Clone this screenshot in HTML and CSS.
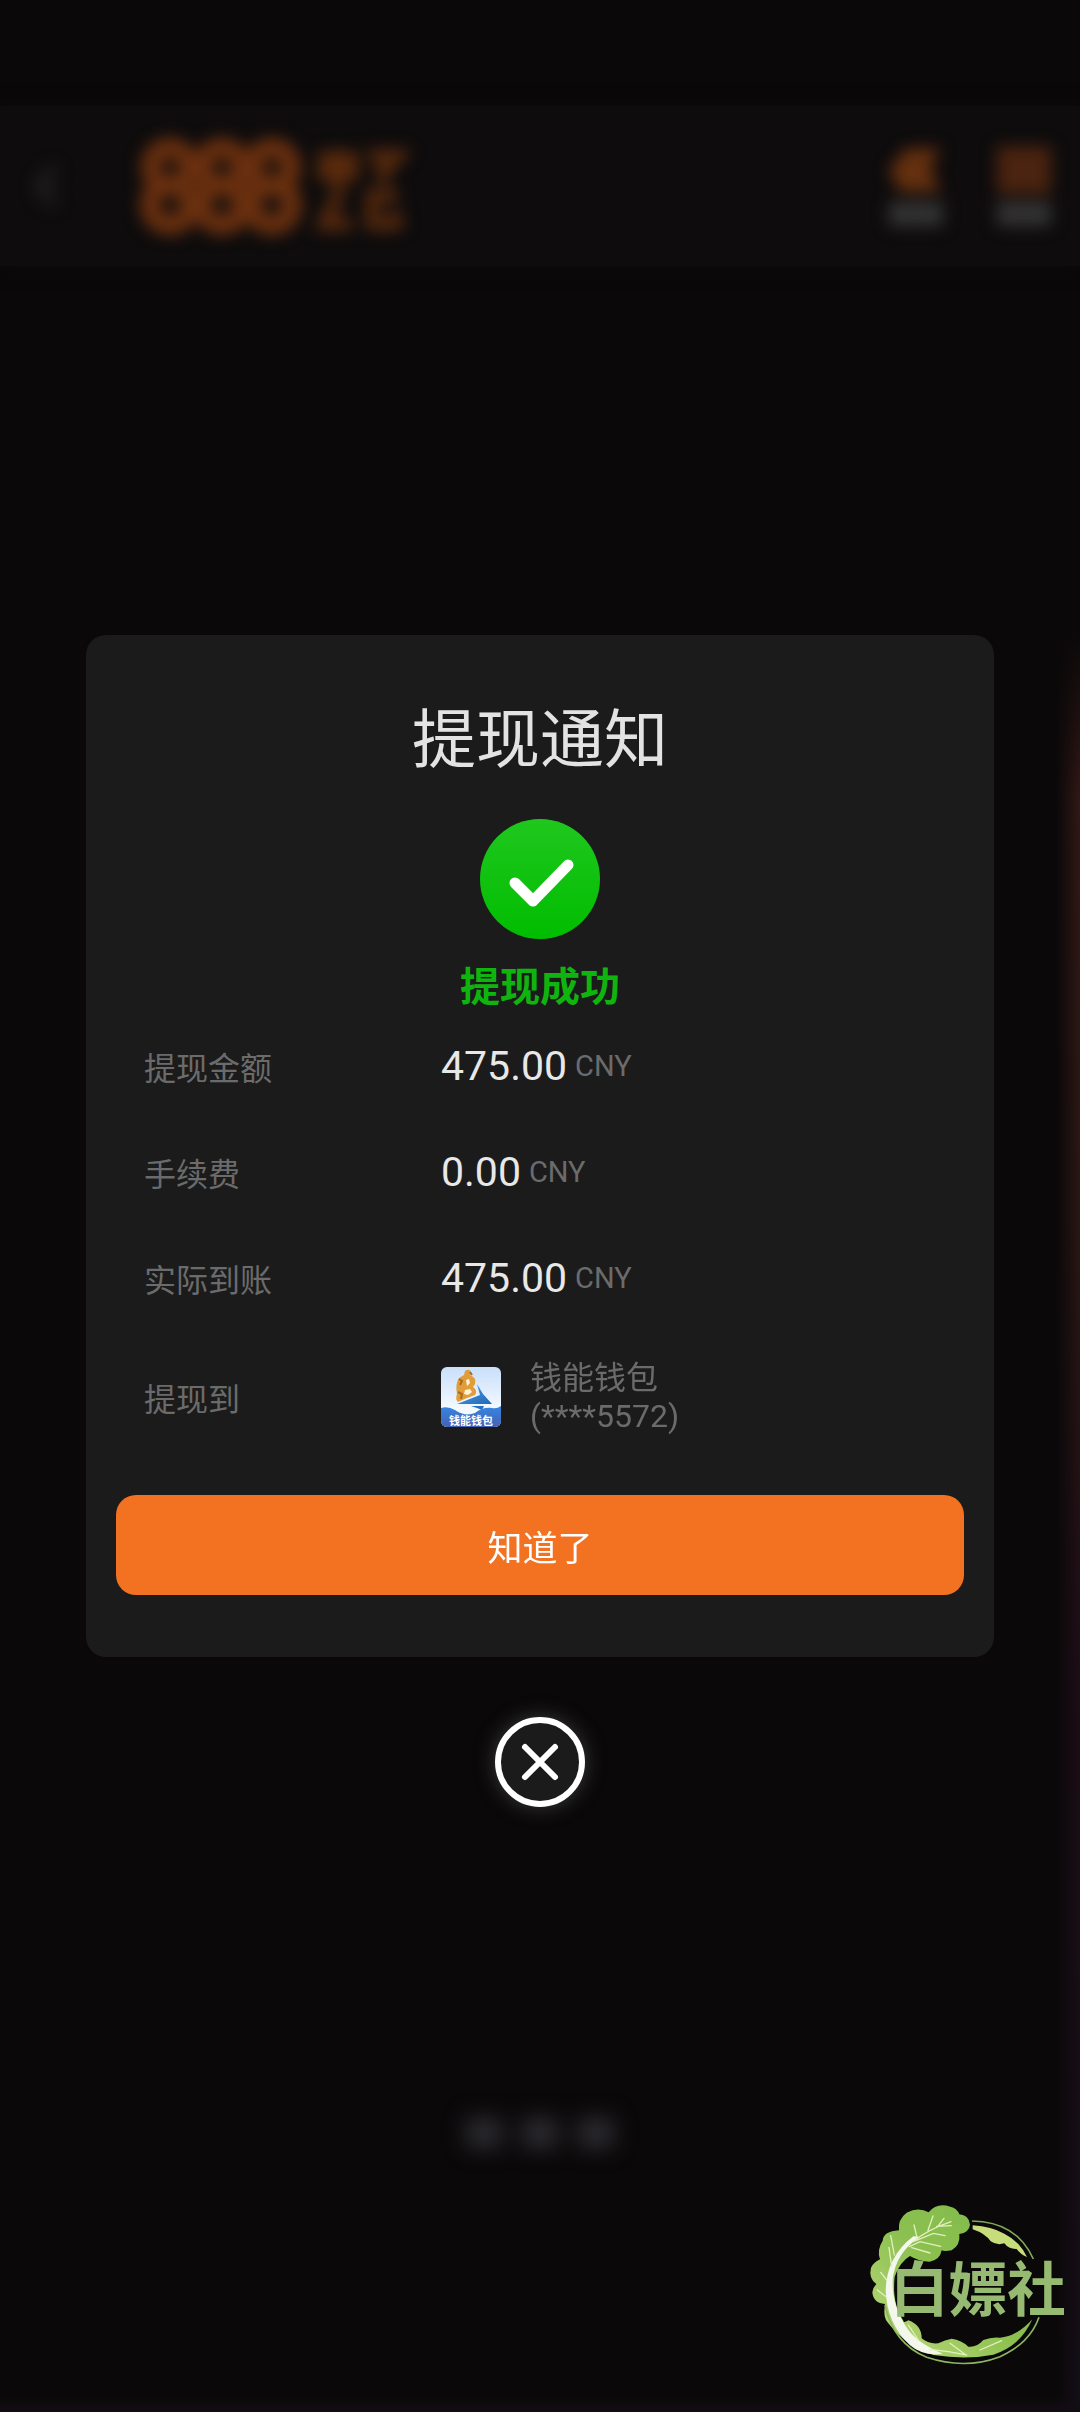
FILE: index.html
```html
<!DOCTYPE html>
<html lang="zh-CN">
<head>
<meta charset="utf-8">
<meta name="viewport" content="width=device-width, initial-scale=1">
<title>提现通知</title>
<link rel="stylesheet" href="styles.css">
</head>
<body>
<div class="page" aria-hidden="true">
  <header class="topbar">
    <svg class="back" viewBox="0 0 24 48"><path d="M20 6 6 24l14 18" fill="none" stroke="#333" stroke-width="6"/></svg>
    <svg class="brand" viewBox="0 0 270 100">
      <g fill="none" stroke="#6b300f" stroke-width="20">
        <circle cx="30" cy="31" r="19"/><circle cx="30" cy="69" r="20"/>
        <circle cx="82" cy="31" r="19"/><circle cx="82" cy="69" r="20"/>
        <circle cx="132" cy="31" r="19"/><circle cx="132" cy="69" r="20"/>
      </g>
      <g fill="none" stroke="#5c2b0d" stroke-width="12">
        <path d="M184 22h28v17h-28zM198 14v40M228 20h30l-15 14v14M200 56l-16 32h28M258 60h-26v28h24V76"/>
      </g>
    </svg>
    <div class="shortcuts">
      <span class="shortcut"><svg viewBox="0 0 50 44"><path d="M0 22 16 2h32L38 20l10 22H10z" fill="#65300f"/></svg><i></i></span>
      <span class="shortcut"><svg viewBox="0 0 50 44"><path d="M0 0h50v44H0z" fill="#4b2410"/></svg><i></i></span>
    </div>
  </header>
  <div class="dots"><i></i><i></i><i></i></div>
</div>

<div class="overlay">
  <section class="dialog" role="dialog" aria-labelledby="dialog-title">
    <h1 class="title" id="dialog-title">提现通知</h1>
    <svg class="success" viewBox="0 0 120 120" aria-hidden="true">
      <defs><linearGradient id="green" x2="0" y2="1"><stop stop-color="#20c71e"/><stop offset="1" stop-color="#00bd00"/></linearGradient></defs>
      <circle cx="60" cy="60" r="60" fill="url(#green)"/>
      <path d="M35 64 53 82 88 46" fill="none" stroke="#fff" stroke-width="11" stroke-linecap="round" stroke-linejoin="round"/>
    </svg>
    <p class="status">提现成功</p>
    <dl class="details">
      <dt>提现金额</dt><dd><span class="amount">475.00</span><span class="unit">CNY</span></dd>
      <dt>手续费</dt><dd><span class="amount">0.00</span><span class="unit">CNY</span></dd>
      <dt>实际到账</dt><dd><span class="amount">475.00</span><span class="unit">CNY</span></dd>
      <dt>提现到</dt>
      <dd>
        <svg class="wallet-icon" viewBox="0 0 60 60" aria-hidden="true">
          <defs>
            <linearGradient id="sky" x2="0" y2="1"><stop stop-color="#c9dffa"/><stop offset=".7" stop-color="#f4f9ff"/></linearGradient>
            <linearGradient id="sea" x2="0" y2="1"><stop stop-color="#3686e2"/><stop offset="1" stop-color="#4661b4"/></linearGradient>
            <linearGradient id="sail" x2="1" y2="1"><stop stop-color="#4aa0ee"/><stop offset="1" stop-color="#2467b4"/></linearGradient>
            <clipPath id="tile"><rect width="60" height="60" rx="6"/></clipPath>
          </defs>
          <g clip-path="url(#tile)">
            <path fill="url(#sky)" d="M0 0h60v60H0z"/>
            <path d="M36 17 42 27 51 37H16L39 28z" fill="url(#sail)"/>
            <path d="M24 4q4-3 6 1l-1 3q7 3 5 9l-2 3q5 3 2 8l-8 3-9 4q-3-3-1-8-2-10 2-16l5-3z" fill="#e29c38"/>
            <path d="M25 13l3-1 1 4-3 3zM24 23l5-1 2 3-4 3-4-1z" fill="#fff4da"/>
            <path d="M18 12l3 2-2 4M17 25l4 2-1 5M29 5l2 3" fill="none" stroke="#a9691e" stroke-width="2"/>
            <path d="M30 39h13l-2 4-5-2z" fill="#246fc2"/>
            <path d="M0 41q7-2 14 2 10 7 20 3 7-6 17-5 5 1 9-2v21H0z" fill="url(#sea)"/>
            <text class="wallet-name" x="30" y="58" text-anchor="middle">钱能钱包</text>
          </g>
        </svg>
        <span class="wallet">钱能钱包<br>(****5572)</span>
      </dd>
    </dl>
    <button class="confirm" type="button">知道了</button>
  </section>
  <button class="close" type="button" aria-label="关闭">
    <svg viewBox="0 0 90 90" aria-hidden="true"><circle cx="45" cy="45" r="42" fill="#1c1b1c"/><g fill="none" stroke="#fff" stroke-width="6" stroke-linecap="round"><circle cx="45" cy="45" r="42"/><path d="M30 30 60 60M60 30 30 60"/></g></svg>
  </button>
</div>

<svg class="watermark" viewBox="0 0 690 696" role="img" aria-label="白嫖社">
  <defs>
    <linearGradient id="leaf" x1="1" y1="0" x2="0" y2="1"><stop stop-color="#7dba49"/><stop offset=".5" stop-color="#8cc050"/><stop offset="1" stop-color="#c0dc80"/></linearGradient>
  </defs>
  <path fill="url(#leaf)" d="M115 430Q98 415 105 372 70 370 67 337 69 322 79 312 55 295 63 263 70 248 90 238 80 210 98 182 100 154 147 151 143 118 170 98 205 80 236 97 260 67 301 80 322 85 328 103 357 105 360 134 358 157 328 162 332 195 305 211 282 215 275 211 270 240 239 245 208 245 180 228 150 245 134 290 125 370 160 422 160 430 175 421 215 435 215 475 235 493 265 490 Q285 480 305 476 335 480 355 500 380 503 400 480 425 470 450 473 500 470 547 418 510 500 430 524 350 540 250 525 170 500 115 430Z"/>
  <path d="M210 170Q135 220 128 300 125 380 175 450 205 490 278 521 220 530 180 496 110 430 107 330 110 230 190 169Z" fill="#f4f8ec"/>
  <path d="M190 185Q230 150 303 125M201 172 192 135M234 151 249 108M262 141 282 115M260 139 304 137M190 185 250 160 285 167M178 200 210 185 272 199M185 203 240 219M133 225 122 167M125 260 117 202M110 300 92 277M108 350 82 330M175 435 205 480M240 508 295 515 350 525M300 490 345 523M390 510 455 482" fill="none" stroke="#e3efbd" stroke-width="4" stroke-linecap="round"/>
  <path d="M368 136Q425 140 463 161 510 185 531 231 510 222 500 207 476 208 463 190 440 197 422 184 405 160 368 148Z" fill="#c7dd7b"/>
  <path d="M366 123Q500 125 550 237" fill="none" stroke="#81a957" stroke-width="5"/>
  <path d="M105 375Q130 490 230 532 345 570 450 530 540 490 567 412" fill="none" stroke="#8db75d" stroke-width="5"/>
  <text class="watermark-text" x="120" y="393">白嫖社</text>
</svg>
</body>
</html>
```
FILE: styles.css
```css
* {
  box-sizing: border-box;
}

body {
  margin: 0;
  background: #0a0809;
  color: #e8e8e8;
  font-family: Roboto, "Noto Sans CJK SC", sans-serif;
}

h1, p, dl, dd {
  margin: 0;
}

button {
  border: 0;
  padding: 0;
  font-family: inherit;
  cursor: pointer;
}

svg {
  display: block;
}

/* Dimmed page behind the dialog */
.page {
  display: flex;
  flex-direction: column;
  justify-content: space-between;
  min-height: 100vh;
  padding: 106px 0 264px;
  overflow: hidden;
  background:
    linear-gradient(transparent, #120d13) bottom / 100% 16px no-repeat,
    linear-gradient(to left, transparent, #0a0809 24px),
    linear-gradient(transparent 26%, #321715 33%, #2a1713 50%, #1d0d17 70%, #140e16);
}

.topbar {
  display: flex;
  align-items: center;
  height: 160px;
  padding: 0 26px 0 34px;
  background: #0e0c0d;
  box-shadow: 0 0 16px #0e0c0d;
}

.back {
  width: 24px;
  height: 48px;
  filter: blur(9px);
}

.brand {
  width: 270px;
  height: 100px;
  margin-left: 82px;
  filter: blur(8px);
}

.shortcuts {
  display: flex;
  gap: 48px;
  margin-left: auto;
}

.shortcut {
  display: flex;
  flex-direction: column;
  align-items: center;
  gap: 8px;
  width: 60px;
  filter: blur(8px);
}

.shortcut svg {
  width: 54px;
  height: 48px;
}

.shortcut i {
  width: 54px;
  height: 24px;
  background: #343334;
}

.dots {
  display: flex;
  justify-content: center;
  gap: 20px;
  filter: blur(11px);
}

.dots i {
  width: 36px;
  height: 30px;
  background: #2d2c30;
}

/* Dialog */
.overlay {
  position: fixed;
  inset: 0;
  display: flex;
  flex-direction: column;
  align-items: center;
  justify-content: center;
  gap: 60px;
  padding: 30px 86px 0;
}

.dialog {
  width: 100%;
  padding: 64px 30px 62px;
  border-radius: 20px;
  background: #1b1b1b;
}

.title {
  font-size: 64px;
  font-weight: 400;
  line-height: 84px;
  text-align: center;
  color: #e3e3e3;
}

.success {
  width: 120px;
  height: 120px;
  margin: 36px auto 24px;
}

.status {
  font-size: 40px;
  font-weight: 700;
  line-height: 50px;
  text-align: center;
  color: #0fb40f;
}

.details {
  display: grid;
  grid-template-columns: 297px 1fr;
  grid-template-rows: repeat(3, 106px) 132px;
  align-items: center;
  padding-left: 28px;
  font-size: 32px;
  color: #6b6b6b;
}

.details dd {
  display: flex;
  align-items: center;
}

.amount {
  font-size: 41px;
  color: #e8e8e8;
}

.unit {
  margin-left: 8px;
  font-size: 29px;
}

.wallet-icon {
  width: 60px;
  height: 60px;
}

.wallet-name {
  font-size: 11px;
  font-weight: 700;
  fill: #fff;
}

.wallet {
  margin-left: 29px;
  line-height: 38px;
}

.confirm {
  display: block;
  width: 100%;
  height: 100px;
  margin-top: 32px;
  border-radius: 20px;
  background: #f27221;
  font-size: 35px;
  color: #fff;
}

.close {
  width: 90px;
  height: 90px;
  border-radius: 50%;
  background: none;
  box-shadow: 0 0 20px #3c3c3c;
}

/* Community watermark in the corner */
.watermark {
  position: fixed;
  right: 0;
  bottom: 0;
  width: 230px;
  height: 232px;
}

.watermark-text {
  font-family: "Noto Sans CJK SC", sans-serif;
  font-size: 176px;
  font-weight: 700;
  fill: #96ba72;
}
```
